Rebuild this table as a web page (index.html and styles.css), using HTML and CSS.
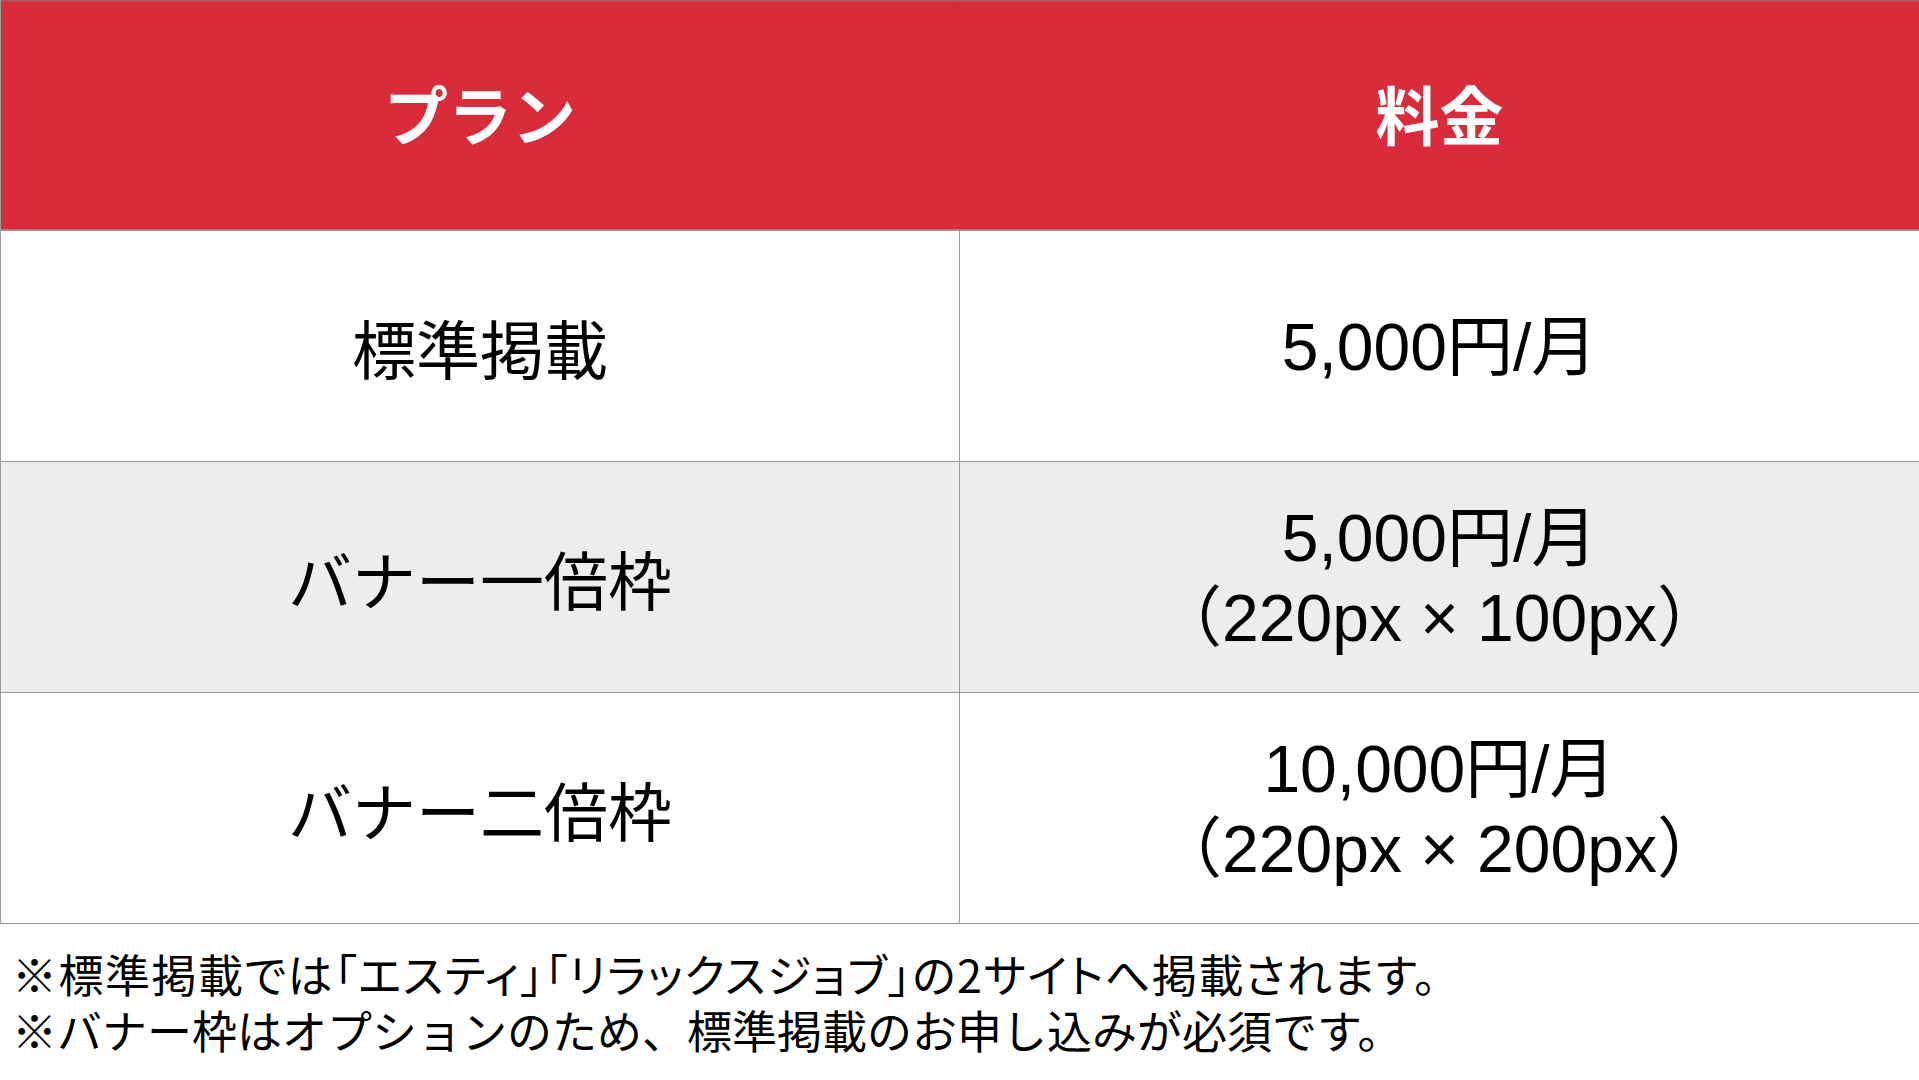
FILE: index.html
```html
<!DOCTYPE html>
<html lang="ja">
<head>
<meta charset="utf-8">
<title>料金表</title>
<link rel="stylesheet" href="styles.css">
</head>
<body>
<div class="table">
  <div class="cell head">プラン</div>
  <div class="cell head head-right">料金</div>

  <div class="cell plan">標準掲載</div>
  <div class="cell price">5,000円/月</div>

  <div class="cell plan alt">バナー一倍枠</div>
  <div class="cell price alt">5,000円/月<br>（220px × 100px）</div>

  <div class="cell plan">バナー二倍枠</div>
  <div class="cell price">10,000円/月<br>（220px × 200px）</div>
</div>
<div class="notes">
  <p class="note-prop">※標準掲載では「エスティ」「リラックスジョブ」の2サイトへ掲載されます。</p>
  <p>※バナー枠はオプションのため、標準掲載のお申し込みが必須です。</p>
</div>
</body>
</html>
```
FILE: styles.css
```css
html, body {
  margin: 0;
  padding: 0;
  background: #ffffff;
}
body {
  width: 1919px;
  height: 1080px;
  overflow: hidden;
  font-family: "Liberation Sans", "Noto Sans CJK JP", sans-serif;
  color: #000;
}
.table {
  display: grid;
  grid-template-columns: 958px 1fr;
  grid-template-rows: 230px 231px 231px 231px;
  border-left: 1px solid #9a9a9a;
  border-bottom: 1px solid #9a9a9a;
  box-sizing: border-box;
  height: 924px;
}
.cell {
  display: flex;
  align-items: center;
  justify-content: center;
  text-align: center;
  font-size: 64px;
  line-height: 80px;
  border-top: 1px solid #9a9a9a;
  box-sizing: border-box;
}
.cell:nth-child(even) {
  border-left: 1px solid #9a9a9a;
}
.head {
  background: #d92b3a;
  color: #ffffff;
  font-family: "Noto Sans CJK JP", sans-serif;
  font-weight: 700;
  border-top: 2px solid #b8505a;
  border-bottom: 1px solid #c07078;
  padding-bottom: 8px;
}
.head.head-right {
  border-left: 1px solid #c8323f;
}
.plan {
  font-family: "Noto Sans CJK JP", sans-serif;
}
.price {
  font-size: 66px;
  padding-top: 2px;
}
.alt {
  background: #ededed;
}
.notes {
  padding: 22px 0 0 12px;
  font-family: "Noto Sans CJK JP", sans-serif;
  font-size: 45px;
  line-height: 56px;
}
.notes p {
  margin: 0;
  white-space: nowrap;
}
.notes .note-prop {
  font-feature-settings: "palt";
  letter-spacing: 1.5px;
}
```
